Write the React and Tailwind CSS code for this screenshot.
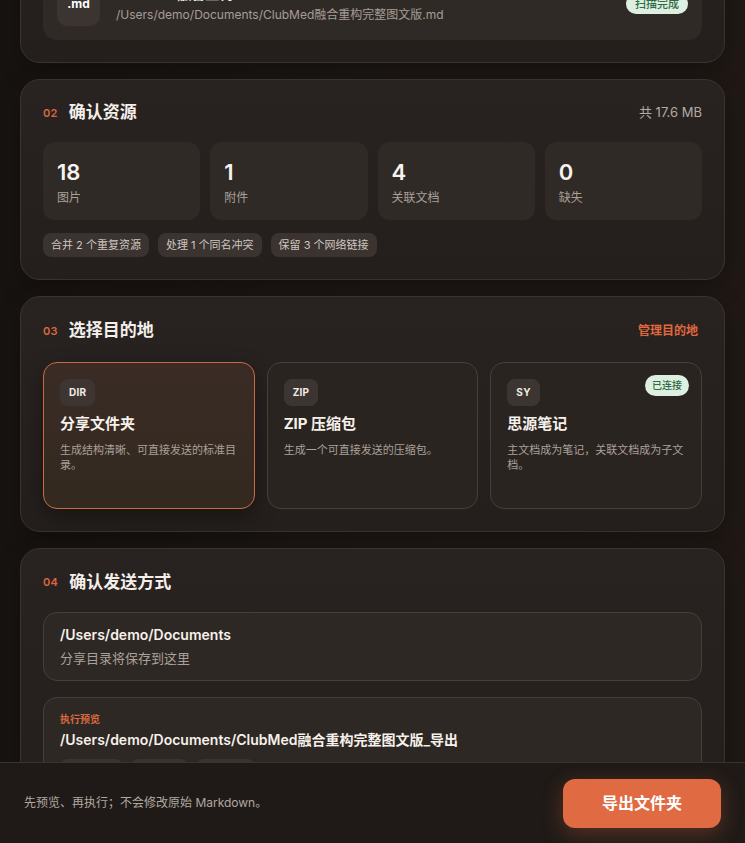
import React from 'react';

const stats = [
  { value: '18', label: '图片' },
  { value: '1', label: '附件' },
  { value: '4', label: '关联文档' },
  { value: '0', label: '缺失' },
];

const resourceChips = ['合并 2 个重复资源', '处理 1 个同名冲突', '保留 3 个网络链接'];

const destinations = [
  { code: 'DIR', title: '分享文件夹', desc: '生成结构清晰、可直接发送的标准目录。', selected: true },
  { code: 'ZIP', title: 'ZIP 压缩包', desc: '生成一个可直接发送的压缩包。' },
  { code: 'SY', title: '思源笔记', desc: '主文档成为笔记，关联文档成为子文档。', connected: true },
];

const SectionHeader = ({ step, title, right, className = '' }) => (
  <div className={`flex items-center justify-between ${className}`}>
    <div className="flex items-center gap-[11px]">
      <span className="text-[11px] font-semibold tracking-wide text-[#d9683f]">{step}</span>
      <h2 className="text-[17px] font-bold text-[#f4efe9]">{title}</h2>
    </div>
    {right}
  </div>
);

const Section = ({ children }) => (
  <section className="rounded-[20px] border border-[#3a332f] bg-gradient-to-b from-[#282321] to-[#241f1d] p-[22px] shadow-[0_8px_24px_rgba(0,0,0,0.25)]">
    {children}
  </section>
);

export default function App() {
  return (
    <div
      className="h-screen overflow-hidden bg-gradient-to-r from-[#171311] via-[#1d1816] to-[#1f1815] text-[#f4efe9]"
      style={{ fontFamily: 'Inter, "Noto Sans CJK SC", "Noto Sans", sans-serif' }}
    >
      <main className="-mt-[95px] flex flex-col gap-4 px-5 pb-24">
        {/* 01 document */}
        <Section>
          <SectionHeader step="01" title="选择文档" className="mb-[18px] h-[22px]" />
          <div className="flex items-center gap-4 rounded-[14px] bg-[#302a27] p-[14px]">
            <div className="flex h-11 w-[43px] items-center justify-center rounded-[10px] bg-[#3b3431] text-[12px] font-bold text-white">
              .md
            </div>
            <div className="min-w-0 flex-1">
              <div className="text-[14px] font-semibold leading-5 text-[#f4efe9]">ClubMed融合重构.md</div>
              <div className="mt-[2px] text-[12px] leading-[18px] text-[#a69d96]">
                /Users/demo/Documents/ClubMed融合重构完整图文版.md
              </div>
            </div>
            <span className="rounded-full bg-[#dcefe1] px-[9px] py-[2px] text-[11px] font-medium text-[#2f6a45]">扫描完成</span>
          </div>
        </Section>

        {/* 02 resources */}
        <Section>
          <SectionHeader
            step="02"
            title="确认资源"
            className="mb-[18px] h-[22px]"
            right={<span className="text-[13px] text-[#b3aaa2]">共 17.6 MB</span>}
          />
          <div className="grid grid-cols-4 gap-[10px]">
            {stats.map((s) => (
              <div key={s.label} className="rounded-[12px] bg-[#302a27] px-[14px] pb-[14px] pt-4">
                <div className="text-[22px] font-semibold leading-[28px] text-[#f7f3ee]">{s.value}</div>
                <div className="mt-1 text-[12px] leading-4 text-[#a9a09a]">{s.label}</div>
              </div>
            ))}
          </div>
          <div className="mt-[13px] flex gap-[9px]">
            {resourceChips.map((c) => (
              <span key={c} className="flex h-6 items-center rounded-[8px] bg-[#3a3330] px-2 text-[11px] text-[#cfc7c0]">
                {c}
              </span>
            ))}
          </div>
        </Section>

        {/* 03 destination */}
        <Section>
          <SectionHeader
            step="03"
            title="选择目的地"
            className="mb-[19px] h-6"
            right={<button className="pr-1 text-[12px] font-semibold text-[#e0683f]">管理目的地</button>}
          />
          <div className="grid grid-cols-3 gap-3">
            {destinations.map((d) => (
              <div
                key={d.code}
                className={`relative h-[147px] rounded-[14px] border px-4 pt-[15px] ${
                  d.selected
                    ? 'border-[#c96a45] bg-gradient-to-b from-[#3a2c25] to-[#33291f] shadow-[0_8px_22px_rgba(0,0,0,0.35)]'
                    : 'border-[#463e39] bg-[#2a2421]'
                }`}
              >
                <span className="inline-flex h-[27px] items-center rounded-[8px] bg-[#3d3532] px-[9px] text-[10px] font-bold tracking-wide text-[#f1ece6]">
                  {d.code}
                </span>
                {d.connected && (
                  <span className="absolute right-3 top-3 rounded-full bg-[#dcefe1] px-[7px] py-[3px] text-[10px] font-medium text-[#2f6a45]">
                    已连接
                  </span>
                )}
                <div className="mt-2 text-[15px] font-bold leading-5 text-[#f6f1eb]">{d.title}</div>
                <div className="mt-[9px] text-[11px] leading-[15px] text-[#aaa19a]">{d.desc}</div>
              </div>
            ))}
          </div>
        </Section>

        {/* 04 delivery */}
        <Section>
          <SectionHeader step="04" title="确认发送方式" className="mb-[18px] h-[23px]" />
          <div className="rounded-[14px] border border-[#463e39] bg-[#2e2825] px-4 py-3">
            <div className="text-[14px] font-semibold leading-5 text-[#f6f1eb]">/Users/demo/Documents</div>
            <div className="mt-[3px] text-[13px] leading-5 text-[#a9a09a]">分享目录将保存到这里</div>
          </div>
          <div className="mt-4 rounded-[14px] border border-[#463e39] bg-[#2e2825] px-4 pb-4 pt-[14px]">
            <div className="text-[10px] font-bold leading-[14px] text-[#d7683f]">执行预览</div>
            <div className="mt-1 text-[14px] font-semibold leading-5 text-[#f6f1eb]">
              /Users/demo/Documents/ClubMed融合重构完整图文版_导出
            </div>
            <div className="mt-[9px] flex gap-2">
              {['18 张图片', '1 个附件', '4 篇文档'].map((c) => (
                <span key={c} className="flex h-6 items-center rounded-[8px] bg-[#3a3330] px-2 text-[11px] text-[#cfc7c0]">
                  {c}
                </span>
              ))}
            </div>
          </div>
        </Section>
      </main>

      <footer className="fixed inset-x-0 bottom-0 flex h-[81px] items-center justify-between border-t border-[#39322e] bg-[#1f1a17] pl-6 pr-6">
        <p className="text-[12px] text-[#b0a8a0]">先预览、再执行；不会修改原始 Markdown。</p>
        <button className="h-[49px] w-[158px] rounded-[12px] bg-[#e06a41] text-[16px] font-bold text-white shadow-[0_6px_22px_rgba(224,106,65,0.3)]">
          导出文件夹
        </button>
      </footer>
    </div>
  );
}
